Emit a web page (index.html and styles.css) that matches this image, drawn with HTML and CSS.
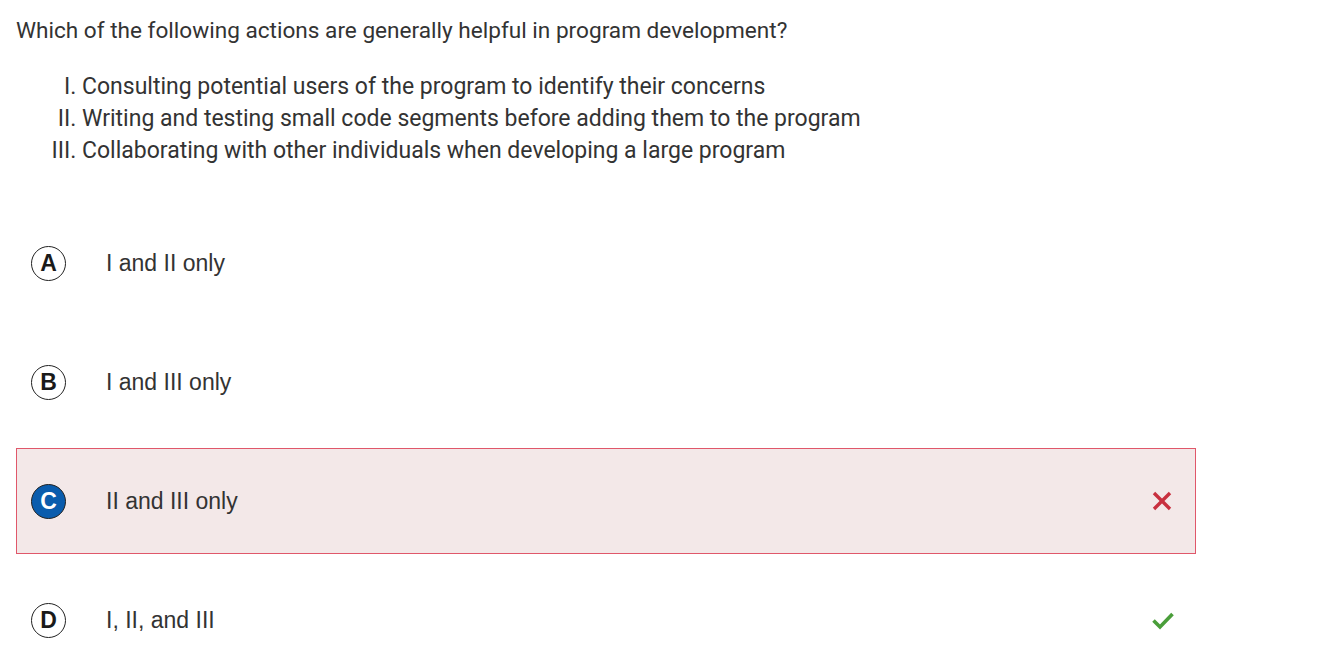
FILE: index.html
```html
<!DOCTYPE html>
<html>
<head>
<meta charset="utf-8">
<link rel="stylesheet" href="styles.css">
</head>
<body>
<div class="page">
  <p class="question">Which of the following actions are generally helpful in program development?</p>
  <ol class="items">
    <li>Consulting potential users of the program to identify their concerns</li>
    <li>Writing and testing small code segments before adding them to the program</li>
    <li>Collaborating with other individuals when developing a large program</li>
  </ol>
  <div class="options">
    <div class="option">
      <span class="badge">A</span>
      <span class="label">I and II only</span>
    </div>
    <div class="option">
      <span class="badge">B</span>
      <span class="label">I and III only</span>
    </div>
    <div class="option wrong">
      <span class="badge selected">C</span>
      <span class="label">II and III only</span>
      <svg class="mark mark-x" width="20" height="20" viewBox="0 0 20 20"><path d="M2 2 L18 18 M18 2 L2 18" stroke="#c8303f" stroke-width="3.4" fill="none"/></svg>
    </div>
    <div class="option">
      <span class="badge">D</span>
      <span class="label">I, II, and III</span>
      <svg class="mark mark-check" width="22" height="20" viewBox="0 0 22 20"><path d="M1.5 10.5 L8 17 L20.5 4" stroke="#4a9e3a" stroke-width="3.6" fill="none"/></svg>
    </div>
  </div>
</div>
</body>
</html>
```
FILE: styles.css
```css
html, body { margin: 0; padding: 0; background: #fff; }
.page { padding: 17px 0 0 16px; width: 1180px; color: #333; }
.question {
  font-family: Roboto, "Liberation Sans", sans-serif;
  font-size: 22.6px;
  line-height: 28px;
  margin: 0;
}
.items {
  font-family: Roboto, "Liberation Sans", sans-serif;
  font-size: 23px;
  line-height: 32px;
  list-style-type: upper-roman;
  margin: 26px 0 0 0;
  padding-left: 66px;
}
.items li { padding-left: 0; }
.options {
  margin-top: 43px;
  display: flex;
  flex-direction: column;
  gap: 13px;
}
.option {
  height: 106px;
  box-sizing: border-box;
  display: flex;
  align-items: center;
  padding: 0 14px;
  border: 1px solid transparent;
  font-family: "Liberation Sans", Arial, sans-serif;
  font-size: 23px;
}
.option.wrong {
  background: #f3e8e8;
  border-color: #e0576a;
}
.badge {
  width: 33px; height: 33px;
  border: 1.3px solid #222;
  border-radius: 50%;
  display: flex; align-items: center; justify-content: center;
  font-weight: bold;
  font-size: 23px;
  color: #1a1a1a;
  flex: none;
}
.badge.selected {
  background: #0a5cad;
  color: #fff;
}
.label { margin-left: 40px; flex: 1; }
.mark-x { margin-right: 9px; }
.mark-check { margin-right: 7px; }
```
